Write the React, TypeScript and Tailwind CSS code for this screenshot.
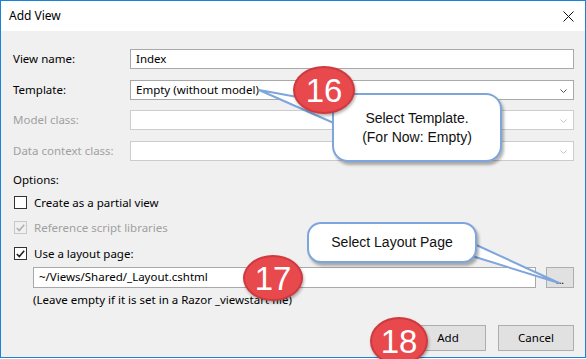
import React from "react";

const ui = { fontFamily: '"Noto Sans", "Open Sans", sans-serif' };
const callout = { fontFamily: '"Liberation Sans", Arial, sans-serif' };

function Chevron({ disabled }: { disabled?: boolean }) {
  return (
    <svg width="7" height="4" viewBox="0 0 7 4" className="absolute right-[6px] top-[8px]">
      <polyline points="0.5,0.5 3.5,3.5 6.5,0.5" fill="none" stroke={disabled ? "#c4c4c4" : "#555"} strokeWidth="1" />
    </svg>
  );
}

function Field({ label, value, combo, disabled }: { label: string; value?: string; combo?: boolean; disabled?: boolean }) {
  return (
    <div className="grid h-[20px] grid-cols-[117px_1fr] items-center">
      <span className={disabled ? "text-[#a0a0a0]" : "text-black"}>{label}</span>
      <div
        className={
          "relative flex h-[20px] items-center bg-white pl-[5px] " +
          (disabled ? "border border-[#cccccc]" : "border border-[#a9a9a9]")
        }
      >
        {value}
        {combo && <Chevron disabled={disabled} />}
      </div>
    </div>
  );
}

function Check({ checked, disabled, label }: { checked?: boolean; disabled?: boolean; label: string }) {
  return (
    <div className="flex h-[16px] items-center">
      <span
        className={
          "mr-[7px] ml-[1px] flex size-[13px] items-center justify-center border " +
          (disabled ? "border-[#c8c8c8] bg-[#f0f0f0]" : "border-[#333] bg-white")
        }
      >
        {checked && (
          <svg width="9" height="8" viewBox="0 0 9 8">
            <polyline points="0.8,4 3.3,6.5 8.2,0.8" fill="none" stroke={disabled ? "#b0b0b0" : "#222"} strokeWidth="1.6" />
          </svg>
        )}
      </span>
      <span className={disabled ? "text-[#a0a0a0]" : "text-black"}>{label}</span>
    </div>
  );
}

function Badge({ n, className }: { n: number; className: string }) {
  return (
    <div
      className={
        "absolute flex items-center justify-center rounded-[50%] border-2 border-[#cf3a3e] bg-[#e8494d] text-[33px] leading-none text-white shadow-[1px_2px_3px_rgba(0,0,0,0.3)] " +
        className
      }
      style={callout}
    >
      {n}
    </div>
  );
}

export default function App() {
  return (
    <div className="relative h-[359px] w-[586px] overflow-hidden bg-white text-[11.5px]" style={ui}>
      <div className="flex h-[358px] w-[586px] flex-col border border-[#1883d7]">
        <div className="flex h-[30px] shrink-0 items-center justify-between bg-white pl-[8px] pr-[11px]">
          <span className="text-[12px] text-black">Add View</span>
          <svg width="11" height="11" viewBox="0 0 11 11">
            <path d="M0.5 0.5L10.5 10.5M10.5 0.5L0.5 10.5" stroke="#111" strokeWidth="1" />
          </svg>
        </div>

        <div className="flex flex-1 flex-col bg-[#f0f0f0] pl-[12px] pr-[11px] pt-[18px]">
          <div className="flex flex-col gap-[10.5px]">
            <Field label="View name:" value="Index" />
            <Field label="Template:" value="Empty (without model)" combo />
            <Field label="Model class:" combo disabled />
            <Field label="Data context class:" combo disabled />
          </div>

          <div className="mt-[11px] leading-[16px]">Options:</div>
          <div className="mt-[7px]">
            <Check label="Create as a partial view" />
          </div>
          <div className="mt-[9px]">
            <Check label="Reference script libraries" checked disabled />
          </div>
          <div className="mt-[10px]">
            <Check label="Use a layout page:" checked />
          </div>

          <div className="mt-[5px] ml-[20px] flex h-[21px] gap-[10px]">
            <div className="flex h-[21px] w-[503px] items-center border border-[#a9a9a9] bg-white pl-[5px]">
              ~/Views/Shared/_Layout.cshtml
            </div>
            <div className="flex h-[21px] w-[28px] items-end justify-center border border-[#adadad] bg-[#e1e1e1] pb-[2px] text-[10px] leading-none">
              ...
            </div>
          </div>
          <div className="mt-[4px] ml-[20px] leading-[16px]">(Leave empty if it is set in a Razor _viewstart file)</div>

          <div className="mt-[17px] flex justify-end gap-[12px]">
            <button className="h-[26px] w-[76px] border border-[#adadad] bg-[#e1e1e1]">Add</button>
            <button className="h-[26px] w-[76px] border border-[#adadad] bg-[#e1e1e1]">Cancel</button>
          </div>
        </div>
      </div>

      {/* callout tails */}
      <svg className="pointer-events-none absolute inset-0" width="586" height="359">
        <polygon points="259,90 336,104 336,124" fill="#fff" stroke="#7ea6dc" strokeWidth="2" strokeLinejoin="round" />
        <polygon points="472,243 472,256 559,283" fill="#fff" stroke="#7ea6dc" strokeWidth="2" strokeLinejoin="round" />
      </svg>

      <div
        className="absolute left-[332px] top-[93px] flex h-[69px] w-[170px] flex-col items-center justify-center rounded-[16px] border-[2.5px] border-[#7ea6dc] bg-white text-[14px] leading-[19px] text-[#111] shadow-[2px_3px_3px_rgba(0,0,0,0.3)]"
        style={callout}
      >
        <span>Select Template.</span>
        <span>(For Now: Empty)</span>
      </div>

      <div
        className="absolute left-[307px] top-[222px] flex h-[41px] w-[170px] items-center justify-center rounded-[14px] border-[2.5px] border-[#7ea6dc] bg-white text-[14px] text-[#111] shadow-[2px_3px_3px_rgba(0,0,0,0.3)]"
        style={callout}
      >
        Select Layout Page
      </div>

      <Badge n={16} className="left-[293px] top-[66px] h-[48px] w-[62px]" />
      <Badge n={17} className="left-[243px] top-[255px] h-[46px] w-[60px]" />
      <Badge n={18} className="left-[370px] top-[317px] h-[48px] w-[58px]" />
    </div>
  );
}
